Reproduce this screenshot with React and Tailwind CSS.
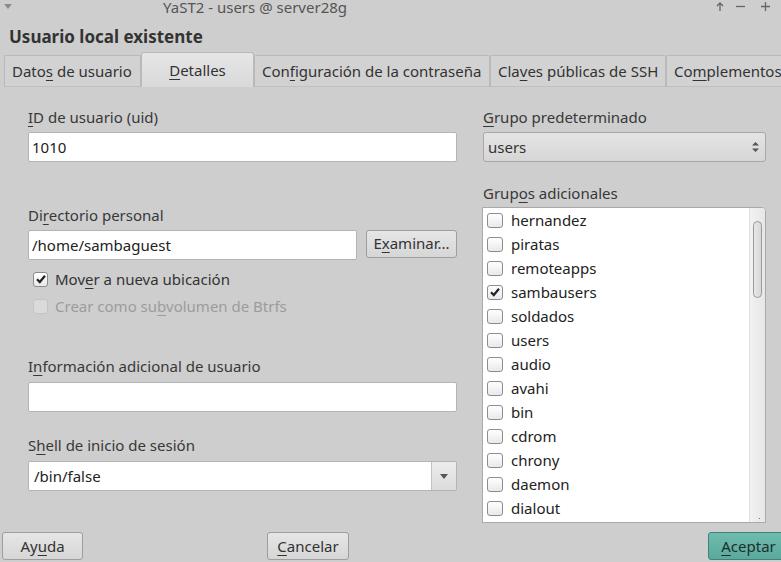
import React from 'react';

const font = { fontFamily: '"Noto Sans", "Open Sans", sans-serif' };

// underlined mnemonic letter
const M = ({ children }) => (
  <span className="underline decoration-1 underline-offset-[3px]">{children}</span>
);

const Check = () => (
  <svg width="12" height="12" viewBox="0 0 12 12" className="block">
    <path d="M2 6.2 L4.8 9 L10 2.8" fill="none" stroke="#222" strokeWidth="2.2" />
  </svg>
);

const Box = ({ checked, disabled, size = 'w-[15px] h-[15px]' }) => (
  <div
    className={`${size} shrink-0 rounded-[3px] border flex items-center justify-center ${
      disabled
        ? 'border-[#c4c4c4] bg-[#dadada]'
        : 'border-[#8c8c8c] bg-gradient-to-b from-[#ffffff] to-[#e9e9e9]'
    }`}
  >
    {checked && <Check />}
  </div>
);

const groups = [
  ['hernandez', false],
  ['piratas', false],
  ['remoteapps', false],
  ['sambausers', true],
  ['soldados', false],
  ['users', false],
  ['audio', false],
  ['avahi', false],
  ['bin', false],
  ['cdrom', false],
  ['chrony', false],
  ['daemon', false],
  ['dialout', false],
];

const Label = ({ children, className = '' }) => (
  <div className={`h-[20px] leading-[20px] text-[15px] text-[#383838] ${className}`}>{children}</div>
);

const Input = ({ value, className = '' }) => (
  <div
    className={`h-[30px] bg-white border border-[#b4b4b4] rounded-[2px] pl-[3px] flex items-center text-[15px] text-[#222] ${className}`}
  >
    {value}
  </div>
);

const Button = ({ children, className = '' }) => (
  <div
    className={`h-[28px] shrink-0 rounded-[3px] border border-[#9e9e9e] bg-gradient-to-b from-[#e6e6e6] to-[#d6d6d6] flex items-center justify-center text-[15px] text-[#333] ${className}`}
  >
    {children}
  </div>
);

const Tab = ({ children, width, active }) =>
  active ? (
    <div
      className={`${width} shrink-0 h-[35px] border border-b-0 border-[#b9b9b9] rounded-t-[3px] bg-gradient-to-b from-[#e6e6e6] to-[#d9d9d9] flex items-center justify-center text-[15px] text-[#333]`}
    >
      {children}
    </div>
  ) : (
    <div
      className={`${width} shrink-0 h-[32px] border border-[#b9b9b9] border-b-[#c0c0c0] rounded-t-[2px] bg-[#d2d2d2] flex items-center pl-[7px] text-[15px] text-[#333] whitespace-nowrap`}
    >
      {children}
    </div>
  );

export default function App() {
  return (
    <div className="w-[781px] h-[562px] overflow-hidden bg-[#cecece]" style={font}>
      {/* title bar */}
      <div className="h-[17px] flex items-start text-[15px] text-[#555]">
        <svg width="8" height="5" viewBox="0 0 8 5" className="ml-[4px] mt-[4px]">
          <path d="M0 0 H8 L4 5 Z" fill="#8a8a8a" />
        </svg>
        <div className="ml-[151px] leading-[15px] whitespace-nowrap">YaST2 - users @ server28g</div>
        <div className="ml-auto flex items-center mt-[2px] text-[#666]">
          <svg width="8" height="9" viewBox="0 0 8 9">
            <path d="M4 1 V9 M1 4 L4 1 L7 4" fill="none" stroke="#666" strokeWidth="1.3" />
          </svg>
          <svg width="9" height="9" viewBox="0 0 9 9" className="ml-[12px]">
            <path d="M0 4.5 H9" stroke="#666" strokeWidth="1.3" />
          </svg>
          <svg width="9" height="9" viewBox="0 0 9 9" className="ml-[16px] mr-[11px]">
            <path d="M0 4.5 H9 M4.5 0 V9" stroke="#666" strokeWidth="1.3" />
          </svg>
        </div>
      </div>

      {/* heading */}
      <div className="h-[35px] pl-[9px] pt-[9px] text-[17px] font-bold text-[#333] leading-[22px]">
        Usuario local existente
      </div>

      {/* tabs */}
      <div className="h-[35px] flex items-end pl-[4px]">
        <Tab width="w-[137px]">
          Dato<M>s</M>&nbsp;de usuario
        </Tab>
        <Tab width="w-[113px]" active>
          <M>D</M>etalles
        </Tab>
        <Tab width="w-[236px]">
          Con<M>f</M>iguración de la contraseña
        </Tab>
        <Tab width="w-[176px]">
          Cla<M>v</M>es públicas de SSH
        </Tab>
        <Tab width="w-[130px]">
          Co<M>m</M>plementos
        </Tab>
      </div>

      {/* body */}
      <div className="h-[440px] flex">
        {/* left column */}
        <div className="ml-[28px] w-[429px] flex flex-col">
          <Label className="mt-[20px]">
            <M>I</M>D de usuario (uid)
          </Label>
          <Input value="1010" className="mt-[5px]" />

          <Label className="mt-[43px]">
            Di<M>r</M>ectorio personal
          </Label>
          <div className="mt-[5px] flex items-center">
            <Input value="/home/sambaguest" className="w-[329px]" />
            <Button className="ml-[9px] w-[91px] -mt-[3px]">
              E<M>x</M>aminar...
            </Button>
          </div>

          <div className="mt-[9px] h-[20px] flex items-center pl-[5px]">
            <Box checked size="w-[15px] h-[15px]" />
            <span className="ml-[7px] text-[15px] text-[#333]">
              Mov<M>e</M>r a nueva ubicación
            </span>
          </div>
          <div className="mt-[7px] h-[20px] flex items-center pl-[5px]">
            <Box disabled size="w-[15px] h-[15px]" />
            <span className="ml-[7px] text-[15px] text-[#9c9c9c]">
              Crear como su<M>b</M>volumen de Btrfs
            </span>
          </div>

          <Label className="mt-[40px]">
            I<M>n</M>formación adicional de usuario
          </Label>
          <Input value="" className="mt-[6px]" />

          <Label className="mt-[23px]">
            S<M>h</M>ell de inicio de sesión
          </Label>
          <div className="mt-[6px] h-[30px] flex bg-white border border-[#b4b4b4] rounded-[2px]">
            <div className="flex-1 flex items-center pl-[5px] text-[15px] text-[#222]">/bin/false</div>
            <div className="w-[25px] border-l border-[#c2c2c2] bg-gradient-to-b from-[#ececec] to-[#dcdcdc] flex items-center justify-center">
              <svg width="8" height="5" viewBox="0 0 8 5">
                <path d="M0 0 H8 L4 5 Z" fill="#555" />
              </svg>
            </div>
          </div>
        </div>

        {/* right column */}
        <div className="ml-[25px] w-[284px] flex flex-col">
          <Label className="mt-[20px] ml-[1px]">
            <M>G</M>rupo predeterminado
          </Label>
          <div className="mt-[5px] ml-[1px] h-[30px] rounded-[3px] border border-[#a8a8a8] bg-gradient-to-b from-[#e4e4e4] to-[#d6d6d6] flex items-center pl-[4px] text-[15px] text-[#333]">
            <span className="flex-1">users</span>
            <svg width="7" height="12" viewBox="0 0 7 12" className="mr-[6px]">
              <path d="M0 4.5 L3.5 1 L7 4.5 Z M0 7.5 H7 L3.5 11 Z" fill="#555" />
            </svg>
          </div>

          <Label className="mt-[21px] ml-[1px]">
            Grup<M>o</M>s adicionales
          </Label>
          <div className="mt-[4px] h-[316px] border border-[#a9a9a9] bg-white flex rounded-tr-[4px] overflow-hidden">
            <div className="flex-1 flex flex-col">
              {groups.map(([name, checked]) => (
                <div key={name} className="h-[24px] shrink-0 flex items-center pl-[4px]">
                  <Box checked={checked} size="w-[16px] h-[15px]" />
                  <span className="ml-[8px] text-[15px] text-[#222]">{name}</span>
                </div>
              ))}
            </div>
            <div className="w-[16px] bg-gradient-to-r from-[#f2f2f2] to-[#e6e6e6] border-l border-[#e0e0e0] flex flex-col items-center relative">
              <div className="mt-[13px] w-[9px] h-[77px] rounded-full border border-[#9a9a9a] bg-gradient-to-r from-[#e8e8e8] to-[#d8d8d8]" />
              <div className="absolute bottom-[3px] right-[5px] w-[1px] h-[1px] bg-[#777]" />
            </div>
          </div>
        </div>
      </div>

      {/* footer */}
      <div className="h-[35px] flex items-start pt-[5px]">
        <Button className="ml-[2px] w-[81px]">
          Ay<M>u</M>da
        </Button>
        <Button className="ml-[184px] w-[82px]">
          <M>C</M>ancelar
        </Button>
        <div className="ml-auto -mr-[8px] w-[81px] shrink-0 h-[28px] rounded-[3px] border border-[#3e8377] bg-gradient-to-b from-[#6fbcaf] to-[#5ba99c] flex items-center justify-center text-[15px] text-[#1e2e2b]">
          <M>A</M>ceptar
        </div>
      </div>
    </div>
  );
}
